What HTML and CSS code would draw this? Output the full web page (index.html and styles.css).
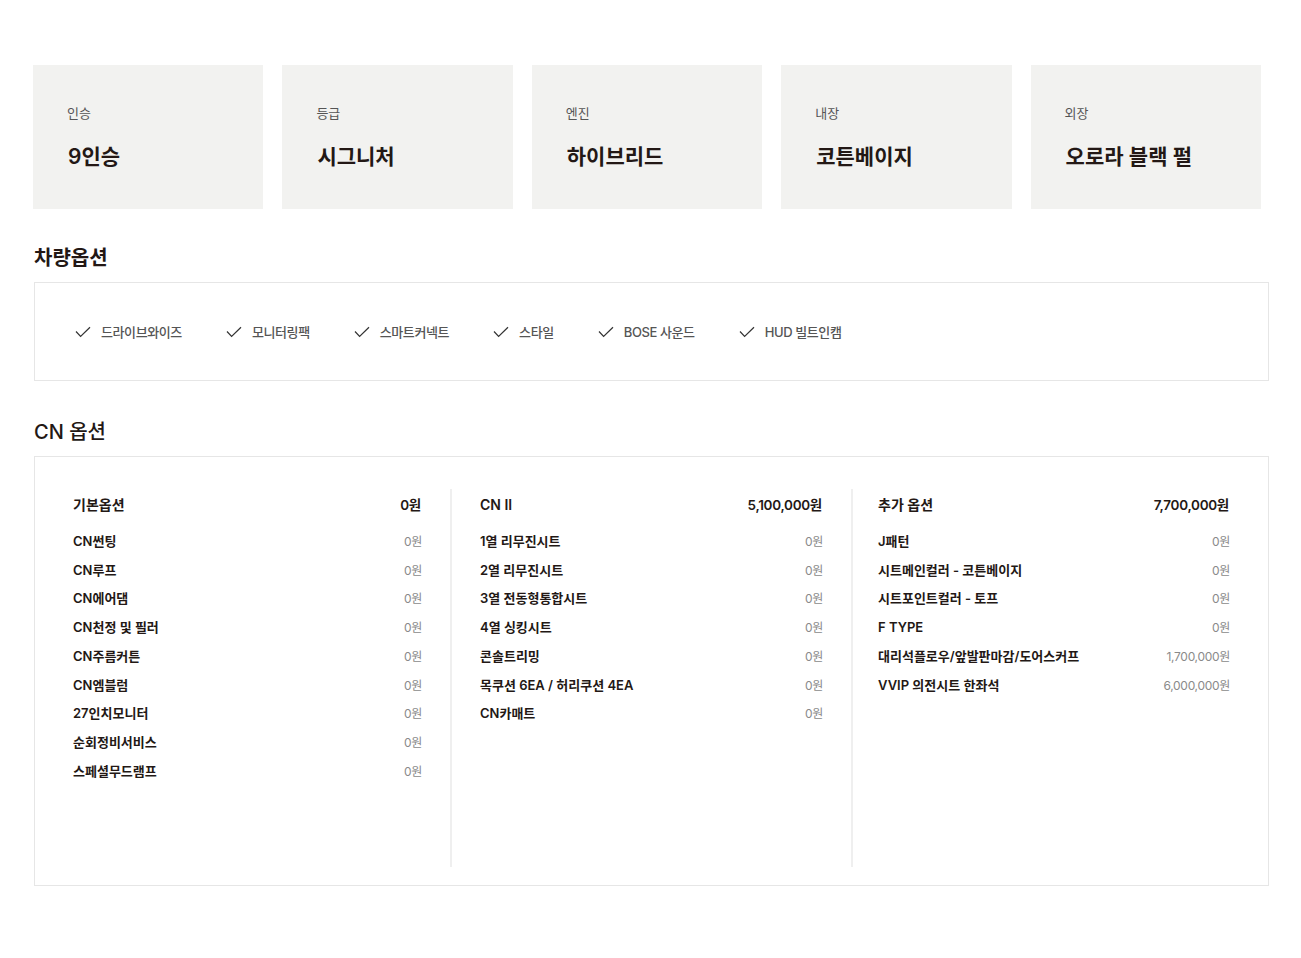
FILE: index.html
```html
<!DOCTYPE html>
<html lang="ko">
<head>
<meta charset="utf-8">
<title>차량 정보</title>
<link rel="stylesheet" href="styles.css">
</head>
<body>
<div class="page">
  <div class="specs">
    <div class="spec"><span class="spec-label">인승</span><span class="spec-value">9인승</span></div>
    <div class="spec"><span class="spec-label">등급</span><span class="spec-value">시그니처</span></div>
    <div class="spec"><span class="spec-label">엔진</span><span class="spec-value">하이브리드</span></div>
    <div class="spec"><span class="spec-label">내장</span><span class="spec-value">코튼베이지</span></div>
    <div class="spec"><span class="spec-label">외장</span><span class="spec-value">오로라 블랙 펄</span></div>
  </div>

  <h2 class="section-title">차량옵션</h2>
  <div class="box options">
    <div class="opt"><svg class="chk" viewBox="0 0 16 12"><path d="M1 5.5 L5.6 10.4 L15 1.2"/></svg><span>드라이브와이즈</span></div>
    <div class="opt"><svg class="chk" viewBox="0 0 16 12"><path d="M1 5.5 L5.6 10.4 L15 1.2"/></svg><span>모니터링팩</span></div>
    <div class="opt"><svg class="chk" viewBox="0 0 16 12"><path d="M1 5.5 L5.6 10.4 L15 1.2"/></svg><span>스마트커넥트</span></div>
    <div class="opt"><svg class="chk" viewBox="0 0 16 12"><path d="M1 5.5 L5.6 10.4 L15 1.2"/></svg><span>스타일</span></div>
    <div class="opt"><svg class="chk" viewBox="0 0 16 12"><path d="M1 5.5 L5.6 10.4 L15 1.2"/></svg><span>BOSE 사운드</span></div>
    <div class="opt"><svg class="chk" viewBox="0 0 16 12"><path d="M1 5.5 L5.6 10.4 L15 1.2"/></svg><span>HUD 빌트인캠</span></div>
  </div>

  <h2 class="section-title cn-title">CN 옵션</h2>
  <div class="box cn">
    <div class="col">
      <div class="col-head"><span>기본옵션</span><span>0원</span></div>
      <ul class="rows">
        <li><span>CN썬팅</span><em>0원</em></li>
        <li><span>CN루프</span><em>0원</em></li>
        <li><span>CN에어댐</span><em>0원</em></li>
        <li><span>CN천정 및 필러</span><em>0원</em></li>
        <li><span>CN주름커튼</span><em>0원</em></li>
        <li><span>CN엠블럼</span><em>0원</em></li>
        <li><span>27인치모니터</span><em>0원</em></li>
        <li><span>순회정비서비스</span><em>0원</em></li>
        <li><span>스페셜무드램프</span><em>0원</em></li>
      </ul>
    </div>
    <div class="col">
      <div class="col-head"><span>CN II</span><span>5,100,000원</span></div>
      <ul class="rows">
        <li><span>1열 리무진시트</span><em>0원</em></li>
        <li><span>2열 리무진시트</span><em>0원</em></li>
        <li><span>3열 전동형통합시트</span><em>0원</em></li>
        <li><span>4열 싱킹시트</span><em>0원</em></li>
        <li><span>콘솔트리밍</span><em>0원</em></li>
        <li><span>목쿠션 6EA / 허리쿠션 4EA</span><em>0원</em></li>
        <li><span>CN카매트</span><em>0원</em></li>
      </ul>
    </div>
    <div class="col">
      <div class="col-head"><span>추가 옵션</span><span>7,700,000원</span></div>
      <ul class="rows">
        <li><span>J패턴</span><em>0원</em></li>
        <li><span>시트메인컬러 - 코튼베이지</span><em>0원</em></li>
        <li><span>시트포인트컬러 - 토프</span><em>0원</em></li>
        <li><span>F TYPE</span><em>0원</em></li>
        <li><span>대리석플로우/앞발판마감/도어스커프</span><em>1,700,000원</em></li>
        <li><span>VVIP 의전시트 한좌석</span><em>6,000,000원</em></li>
      </ul>
    </div>
  </div>
</div>
</body>
</html>
```

FILE: styles.css
```css
* { box-sizing: border-box; }
html, body { margin: 0; padding: 0; background: #fff; }
body {
  font-family: Inter, "Noto Sans CJK KR", "Noto Sans", sans-serif;
  color: #231815;
}
.page {
  padding: 65px 0 60px 33px;
}
.specs {
  width: 1228px;
  display: grid;
  grid-template-columns: repeat(5, 1fr);
  gap: 19px;
}
.spec {
  background: #f2f2f0;
  height: 144px;
  padding: 39px 34px 0;
  display: flex;
  flex-direction: column;
}
.spec-label {
  font-size: 13px;
  line-height: 18px;
  color: #555;
}
.spec-value {
  margin-top: 20px;
  font-size: 21px;
  line-height: 30px;
  font-weight: 600;
  color: #231815;
  padding-left: 1px;
}
.section-title {
  margin: 35px 0 10px 1px;
  font-size: 20px;
  line-height: 28px;
  font-weight: 600;
  color: #231815;
}
.cn-title { margin-top: 37px; font-weight: 500; }
.box {
  width: 1235px;
  margin-left: 1px;
  border: 1px solid #e6e6e6;
}
.options {
  height: 99px;
  display: flex;
  align-items: center;
  padding-left: 40px;
  gap: 44px;
}
.opt {
  display: flex;
  align-items: center;
  gap: 10px;
  font-size: 13px;
  letter-spacing: -0.4px;
  color: #555;
  font-weight: 500;
}
.chk {
  width: 16px;
  height: 12px;
  fill: none;
  stroke: #333;
  stroke-width: 1.2;
}
.cn {
  display: grid;
  grid-template-columns: 379px 401px 1fr;
  padding: 32px 38px 18px 38px;
}
.col {
  min-height: 378px;
  padding: 0 28px;
  border-right: 2px solid #efefef;
}
.col:first-child { padding-left: 0; }
.col:last-child { padding-right: 0; border-right: none; padding-left: 25px; }
.col-head {
  height: 30px;
  display: flex;
  justify-content: space-between;
  align-items: center;
  font-size: 14px;
  font-weight: 600;
  color: #231815;
}
.col-head span:last-child { font-size: 13.5px; padding-right: 1px; letter-spacing: -0.3px; }
.rows {
  list-style: none;
  margin: 7px 0 0;
  padding: 0;
}
.rows li {
  height: 28.75px;
  display: flex;
  justify-content: space-between;
  align-items: center;
  font-size: 13px;
  font-weight: 600;
  color: #231815;
}
.rows em {
  font-style: normal;
  font-weight: 400;
  font-size: 12px;
  color: #8a8a8a;
  letter-spacing: -0.3px;
}
```
